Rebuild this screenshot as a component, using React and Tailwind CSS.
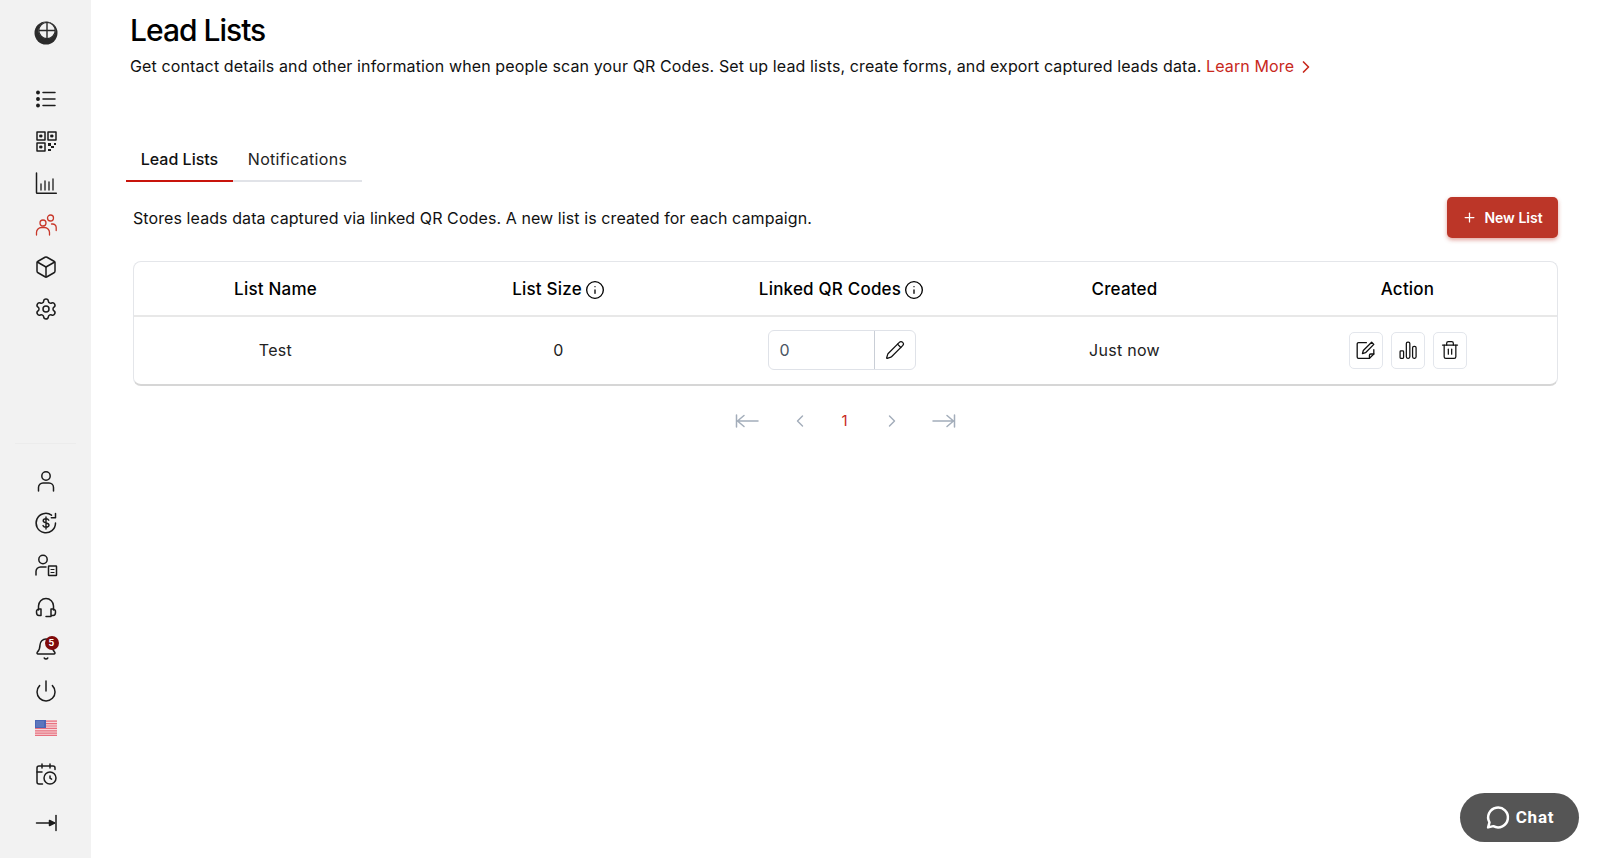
import { Bell, Box, CalendarClock, ChevronLeft, ChevronRight, Info, Pencil, Plus, Power, Settings, Trash2 } from 'lucide-react';

const Svg = ({ className = 'w-6 h-6', children }) => (
  <svg viewBox="0 0 24 24" fill="none" stroke="currentColor" strokeWidth="1.5" strokeLinecap="round" strokeLinejoin="round" className={className}>
    {children}
  </svg>
);

const Logo = () => (
  <svg viewBox="0 0 24 24" className="w-6 h-6">
    <circle cx="12" cy="12" r="11.5" fill="#2b2b2b" />
    <circle cx="13" cy="9.5" r="8.5" fill="#f2f2f2" />
    <path d="M13 1.5v16M5 9.5h16" stroke="#2b2b2b" strokeWidth="1.4" />
    <circle cx="13" cy="9.5" r="8.2" fill="none" stroke="#2b2b2b" strokeWidth="1.2" />
  </svg>
);

const ListIcon = () => (
  <Svg>
    <path d="M9 5.5h12M9 12h12M9 18.5h12" />
    <circle cx="4" cy="5.5" r="1.2" fill="currentColor" />
    <circle cx="4" cy="12" r="1.2" fill="currentColor" />
    <circle cx="4" cy="18.5" r="1.2" fill="currentColor" />
  </Svg>
);

const QrIcon = () => (
  <Svg>
    <rect x="3" y="3" width="8" height="8" />
    <rect x="14" y="3" width="8" height="8" />
    <rect x="3" y="14" width="8" height="8" />
    <path d="M6 6h2v2H6zM17 6h2v2h-2zM6 17h2v2H6z" fill="currentColor" strokeWidth="0.8" />
    <path d="M14 14h3v3h-3zM20 14h2v2h-2zM17 17h3v2h-3zM14 20h3v2h-3z" fill="currentColor" stroke="none" />
  </Svg>
);

const ChartIcon = () => (
  <Svg>
    <path d="M2.5 2v19.5c0 .5.3.8.8.8h19" />
    <path d="M7 19v-6M11 19V10M15 19v-8M19 19V8" strokeWidth="1.3" />
  </Svg>
);

const UsersIcon = () => (
  <svg viewBox="0 0 24 24" fill="none" stroke="currentColor" strokeWidth="1.3" strokeLinecap="round" strokeLinejoin="round" className="w-6 h-6">
    <circle cx="9" cy="10" r="3" />
    <path d="M2.5 22v-2.500a5 5 0 0 1 5-5h3a5 5 0 0 1 5 5V22" />
    <circle cx="16.500" cy="5" r="3" />
    <path d="M17.500 11h1.200a3.500 3.500 0 0 1 3.500 3.500v3" />
  </svg>
);

const UserIcon = () => (
  <Svg>
    <circle cx="12" cy="7" r="4.2" />
    <path d="M4.5 22v-3.5a4.5 4.5 0 0 1 4.5-4.5h6a4.5 4.5 0 0 1 4.5 4.5V22" />
  </Svg>
);

const DollarCycleIcon = () => (
  <Svg>
    <path d="M21.5 12a9.7 9.7 0 1 1-4-7.8" />
    <path d="M21.5 2.5v4.2h-4.2" />
    <path d="M14.8 9.2c-.5-1-1.6-1.5-2.8-1.5-1.5 0-2.8.8-2.8 2.1 0 2.9 5.8 1.4 5.8 4.3 0 1.3-1.3 2.1-3 2.1-1.3 0-2.5-.6-3-1.6M12 6v12" strokeWidth="1.4" />
  </Svg>
);

const UserDocIcon = () => (
  <Svg>
    <circle cx="9" cy="6.5" r="4.2" />
    <path d="M2 22v-3.5a4.5 4.5 0 0 1 4.5-4.5H12" />
    <rect x="14.5" y="13" width="8" height="9.5" rx="0.5" />
    <path d="M17 16.5h3M17 19.5h3" strokeWidth="1.2" />
  </Svg>
);

const HeadsetIcon = () => (
  <Svg>
    <path d="M4.500 15v-4a7.500 7.500 0 0 1 15 0v4" />
    <path d="M7 14H5a2.800 2.800 0 0 0-2.500 3.200c0 2 1 3.300 2.500 3.300h2z" />
    <path d="M17 14h2a2.800 2.800 0 0 1 2.500 3.200c0 2-1 3.300-2.500 3.300h-2z" />
    <path d="M12 21.500h5" />
  </Svg>
);

const CollapseIcon = () => (
  <Svg>
    <path d="M2.500 12h18" />
    <path d="M15.500 9.500l5 2.500-5 2.500z" fill="currentColor" />
    <path d="M22 4.500v15" />
  </Svg>
);

const Flag = () => (
  <svg viewBox="0 0 22 16" className="w-[22px] h-4">
    <rect width="22" height="16" fill="#f6dadd" />
    <path d="M0 1.200h22M0 3.600h22M0 6h22M0 8.400h22M0 10.800h22M0 13.200h22M0 15.400h22" stroke="#e8707f" strokeWidth="1.2" />
    <rect width="11" height="8" fill="#4a66b5" />
    <path d="M1.500 2h8M1.500 4h8M1.500 6h8" stroke="#a9b8e0" strokeWidth="0.8" strokeDasharray="1 1" />
  </svg>
);

const EditNoteIcon = () => (
  <Svg className="w-[21px] h-[21px]">
    <path d="M13 3H4a1.500 1.500 0 0 0-1.500 1.500v15A1.500 1.500 0 0 0 4 21h12.500l5-5v-5" />
    <path d="M21.500 16h-3.500a1.500 1.500 0 0 0-1.500 1.500V21" />
    <path d="M19 2.500l2.500 2.500L12 14.500l-3.500 1 1-3.500z" />
  </Svg>
);

const BarsIcon = () => (
  <Svg className="w-[20px] h-[20px]">
    <rect x="2.500" y="13" width="4.200" height="9" rx="1" />
    <rect x="10" y="2.500" width="4.200" height="19.500" rx="1.800" />
    <rect x="17.500" y="7.500" width="4.200" height="14.500" rx="1.800" />
  </Svg>
);

const PageFirstIcon = () => (
  <svg viewBox="0 0 24 16" fill="none" stroke="currentColor" strokeWidth="1.5" strokeLinecap="round" strokeLinejoin="round" className="w-6 h-4">
    <path d="M1.500 2v12M2 8h21M9 2.500L2.500 8 9 13.500" />
  </svg>
);

const PageLastIcon = () => (
  <svg viewBox="0 0 24 16" fill="none" stroke="currentColor" strokeWidth="1.5" strokeLinecap="round" strokeLinejoin="round" className="w-6 h-4">
    <path d="M22.500 2v12M22 8H1M15 2.500L21.500 8 15 13.500" />
  </svg>
);

const ChatIcon = () => (
  <svg viewBox="0 0 24 24" fill="none" stroke="white" strokeWidth="2.4" strokeLinejoin="round" strokeLinecap="round" className="w-[25px] h-[25px]">
    <path d="M3 21.500l1.300-4.800A9.500 9.500 0 1 1 8 20.300z" />
  </svg>
);

function NavItem({ children, className = '' }) {
  return <div className={`h-[42px] flex items-center justify-center ${className}`}>{children}</div>;
}

function Sidebar() {
  return (
    <aside className="w-[91px] shrink-0 h-[858px] bg-[#f2f2f2] flex flex-col text-[#1c1c1c]">
      <div className="h-[78px] pt-[21px] flex justify-center"><Logo /></div>
      <NavItem><ListIcon /></NavItem>
      <NavItem><QrIcon /></NavItem>
      <NavItem><ChartIcon /></NavItem>
      <NavItem className="text-[#c8372a]"><UsersIcon /></NavItem>
      <NavItem><Box size={24} strokeWidth={1.5} /></NavItem>
      <NavItem><Settings size={24} strokeWidth={1.5} /></NavItem>
      <div className="mt-[113px] mx-[15px] border-t border-[#ececec] h-[17px]" />
      <NavItem><UserIcon /></NavItem>
      <NavItem><DollarCycleIcon /></NavItem>
      <NavItem><UserDocIcon /></NavItem>
      <NavItem><HeadsetIcon /></NavItem>
      <NavItem>
        <div className="relative">
          <Bell size={24} strokeWidth={1.5} />
          <span className="absolute -top-[1px] -right-[1px] w-[14px] h-[14px] rounded-full bg-[#7f0a0a] text-white text-[9px] font-bold flex items-center justify-center">5</span>
        </div>
      </NavItem>
      <NavItem><Power size={24} strokeWidth={1.5} /></NavItem>
      <div className="h-[32px] flex items-center justify-center"><Flag /></div>
      <NavItem className="mt-[9px]"><CalendarClock size={24} strokeWidth={1.5} /></NavItem>
      <NavItem className="mt-[7px]"><CollapseIcon /></NavItem>
    </aside>
  );
}

function HeaderCell({ children, info }) {
  return (
    <div className="flex items-center justify-center gap-[3px] text-[17px] font-medium text-black tracking-[0.2px]">
      {children}
      {info && <Info size={20} strokeWidth={1.6} />}
    </div>
  );
}

function ActionButton({ children }) {
  return (
    <button className="w-[34px] h-[37px] flex items-center justify-center bg-white border border-[#e3e6ec] rounded-[5px] text-[#111]">
      {children}
    </button>
  );
}

export default function App() {
  return (
    <div className="flex w-[1600px] h-[858px] overflow-hidden bg-white font-['Inter','Liberation_Sans',sans-serif] text-[#111]">
      <Sidebar />
      <main className="flex-1 pl-[35px] pr-[42px]">
        <h1 className="pt-[12px] pl-[4px] text-[30px] leading-[36px] font-medium tracking-[-1px] text-black">Lead Lists</h1>
        <p className="mt-[6px] pl-[4px] text-[16px] leading-[24px] tracking-[0.125px] text-[#111]">
          Get contact details and other information when people scan your QR Codes. Set up lead lists, create forms, and export captured leads data.{' '}
          <a className="text-[#c8281c]">Learn More <ChevronRight size={20} strokeWidth={2} className="inline -ml-[3px] -mt-[2px]" /></a>
        </p>

        {/* Tabs */}
        <div className="mt-[64px] flex w-[236px] border-b-2 border-[#e1e3e8] text-[16px]">
          <div className="w-[107px] h-[40px] pb-[4px] -mb-[2px] flex items-center justify-center border-b-2 border-[#c8140c] font-medium text-[#111]">Lead Lists</div>
          <div className="w-[129px] h-[38px] pb-[4px] flex items-center justify-center tracking-[0.3px] text-[#222]">Notifications</div>
        </div>

        <div className="mt-[15px] pl-[7px] flex items-center justify-between">
          <p className="text-[16px] tracking-[0.09px] text-[#111]">Stores leads data captured via linked QR Codes. A new list is created for each campaign.</p>
          <button className="w-[111px] h-[41px] flex items-center justify-center gap-[7px] rounded-[5px] bg-[#bc3628] text-white text-[14px] font-semibold shadow-[0_2px_4px_rgba(188,54,40,0.45)]">
            <Plus size={15} strokeWidth={2} />
            New List
          </button>
        </div>

        {/* Table */}
        <div className="mt-[23px] ml-[7px] border border-[#e4e6ea] border-b-2 border-b-[#d6d6d6] rounded-[8px]">
          <div className="grid grid-cols-5 h-[55px] pt-[3px] pr-[8px] items-center border-b-2 border-[#e8e8e8]">
            <HeaderCell>List Name</HeaderCell>
            <HeaderCell info>List Size</HeaderCell>
            <HeaderCell info>Linked QR Codes</HeaderCell>
            <HeaderCell>Created</HeaderCell>
            <HeaderCell>Action</HeaderCell>
          </div>
          <div className="grid grid-cols-5 h-[67px] pr-[8px] items-center text-[16px] text-center tracking-[0.3px] text-[#222]">
            <div className="pb-[2px]">Test</div>
            <div className="pb-[2px]">0</div>
            <div className="flex justify-center pb-[1px]">
              <div className="flex w-[148px] h-[40px] border border-[#dfe2e8] rounded-[6px]">
                <div className="flex-1 pl-[11px] flex items-center text-[#4b5563] border-r border-[#c9ced6]">0</div>
                <div className="w-[40px] flex items-center justify-center text-[#111]"><Pencil size={20} strokeWidth={1.5} /></div>
              </div>
            </div>
            <div className="pb-[2px]">Just now</div>
            <div className="flex justify-center gap-[8px] pb-[1px]">
              <ActionButton><EditNoteIcon /></ActionButton>
              <ActionButton><BarsIcon /></ActionButton>
              <ActionButton><Trash2 size={20} strokeWidth={1.5} /></ActionButton>
            </div>
          </div>
        </div>

        {/* Pagination */}
        <div className="mt-[24px] ml-[7px] flex items-center justify-center text-[#a3adba]">
          <PageFirstIcon />
          <ChevronLeft size={20} strokeWidth={1.7} className="ml-[31px]" />
          <span className="ml-[31px] mr-[34px] text-[15px] text-[#c8281c]">1</span>
          <ChevronRight size={20} strokeWidth={1.7} />
          <span className="ml-[30px]"><PageLastIcon /></span>
        </div>
      </main>

      <button className="absolute left-[1460px] top-[793px] w-[119px] h-[49px] rounded-full bg-[#555555] flex items-center justify-center gap-[6px] text-white text-[17px] font-bold font-['Roboto',sans-serif] tracking-[0.8px]">
        <ChatIcon />
        Chat
      </button>
    </div>
  );
}
